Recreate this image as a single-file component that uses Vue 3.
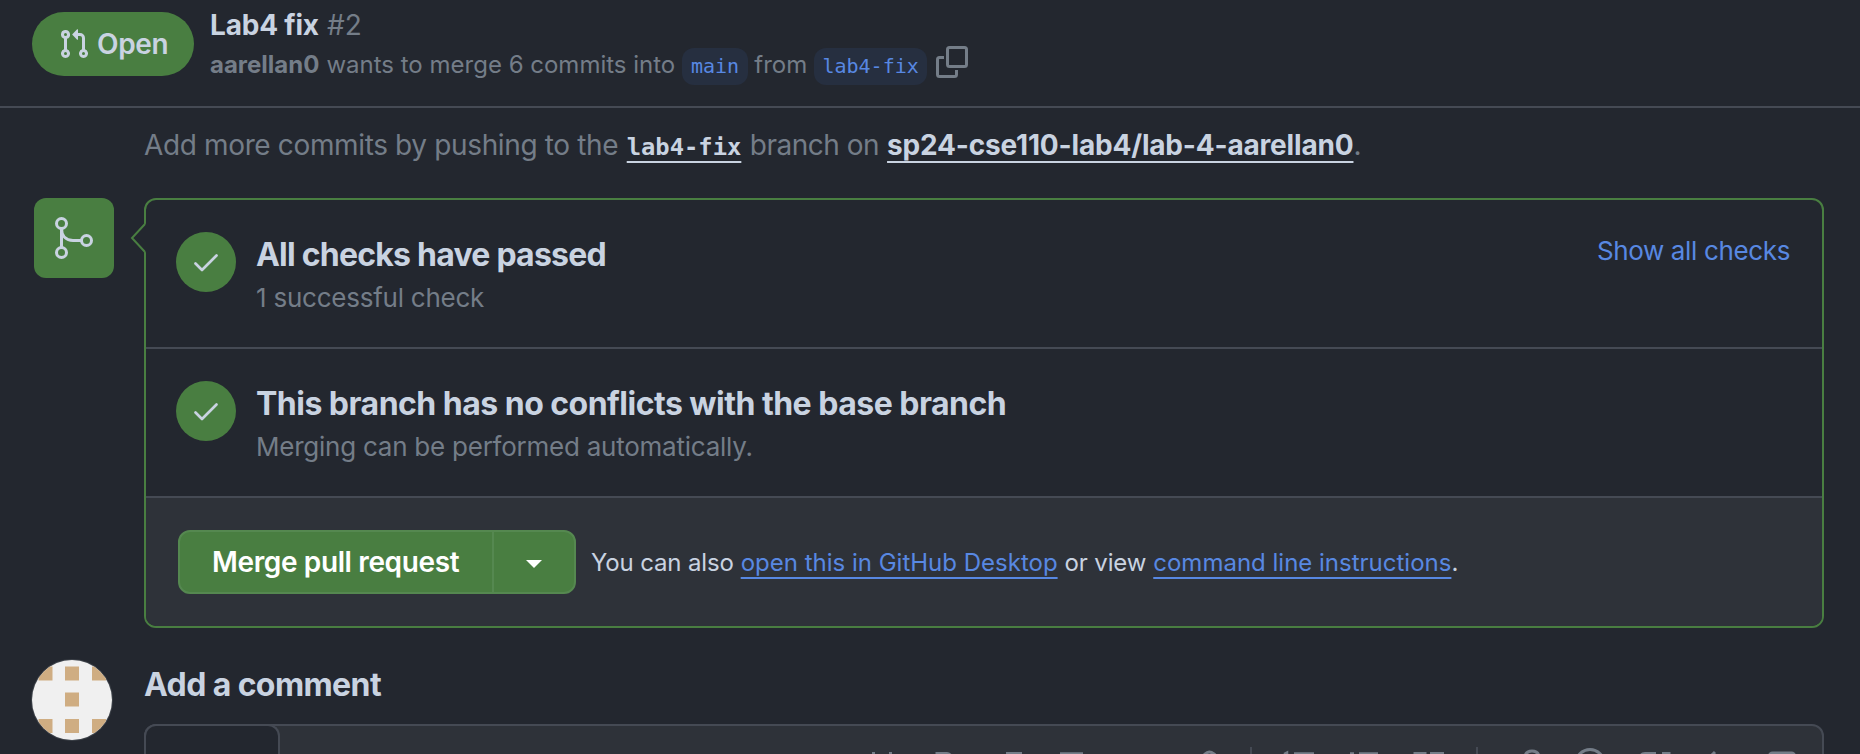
<script setup>
const checks = [
  { id: 'checks', title: 'All checks have passed', note: '1 successful check', action: 'Show all checks' },
  { id: 'conflicts', title: 'This branch has no conflicts with the base branch', note: 'Merging can be performed automatically.' },
]
const avatarCells = [
  [6.5, 7.5], [33, 7.5], [60, 7.5],
  [33, 33.5],
  [6.5, 60], [33, 60], [60, 60],
]
</script>

<template>
  <div class="page">
    <header class="header">
      <span class="state">
        <svg class="state-icon" viewBox="0 0 16 16" width="32" height="32" fill="currentColor">
          <path d="M1.5 3.25a2.25 2.25 0 1 1 3 2.122v5.256a2.251 2.251 0 1 1-1.5 0V5.372A2.25 2.25 0 0 1 1.5 3.25Zm5.677-.177L9.573.677A.25.25 0 0 1 10 .854V2.5h1A2.5 2.5 0 0 1 13.5 5v5.628a2.251 2.251 0 1 1-1.5 0V5a1 1 0 0 0-1-1h-1v1.646a.25.25 0 0 1-.427.177L7.177 3.427a.25.25 0 0 1 0-.354ZM3.75 2.5a.75.75 0 1 0 0 1.5.75.75 0 0 0 0-1.5Zm0 9.5a.75.75 0 1 0 0 1.5.75.75 0 0 0 0-1.5Zm8.25.75a.75.75 0 1 0 1.5 0 .75.75 0 0 0-1.5 0Z" />
        </svg>
        <span class="state-label">Open</span>
      </span>
      <div class="summary">
        <div class="pr-title"><b>Lab4 fix</b><span class="number">#2</span></div>
        <div class="pr-meta">
          <b class="author">aarellan0</b>
          <span class="wants">wants to merge 6 commits into</span>
          <span class="branch">main</span>
          <span class="from">from</span>
          <span class="branch">lab4-fix</span>
          <svg class="copy" viewBox="0 0 32 32" width="32" height="32" fill="none" stroke="currentColor" stroke-width="3">
            <rect x="11.5" y="1.5" width="19" height="19" rx="2" />
            <path d="M8 11.5H3.5A2 2 0 0 0 1.5 13.5V28.5A2 2 0 0 0 3.5 30.5H18.5A2 2 0 0 0 20.5 28.5V24" />
          </svg>
        </div>
      </div>
    </header>

    <main class="content">
      <p class="push-hint">
        <span class="hint-a">Add more commits by pushing to the</span>
        <a class="strong mono">lab4-fix</a>
        <span class="hint-b">branch on</span>
        <span class="hint-c"><a class="strong repo">sp24-cse110-lab4/lab-4-aarellan0</a>.</span>
      </p>

      <section class="merge">
        <span class="merge-badge">
          <svg viewBox="0 0 24 24" width="48" height="48" fill="none" stroke="currentColor" stroke-width="1.5">
            <circle cx="5.75" cy="4.75" r="2.5" />
            <circle cx="5.75" cy="19.25" r="2.5" />
            <circle cx="18.25" cy="13.25" r="2.5" />
            <path d="M5.75 7.25V16.75M5.75 7.25C5.75 11 8 13.25 11.5 13.25H15.75" />
          </svg>
        </span>
        <div class="merge-box">
          <svg class="arrow" viewBox="0 0 16 30" width="16" height="30">
            <path class="arrow-fill" d="M16 0.5L2.5 15L16 29.5Z" />
            <path class="arrow-line" d="M15 1L2 15L15 29" />
          </svg>
          <div v-for="c in checks" :key="c.id" class="row">
            <span class="tick">
              <svg viewBox="0 0 60 60" width="60" height="60" fill="none" stroke="currentColor" stroke-width="2.7" stroke-linecap="round" stroke-linejoin="round">
                <path d="M19.5 31.5L26 38L40.5 23.5" />
              </svg>
            </span>
            <div class="row-text">
              <h3 :class="'title-' + c.id">{{ c.title }}</h3>
              <div class="note">{{ c.note }}</div>
            </div>
            <a v-if="c.action" class="link action">{{ c.action }}</a>
          </div>
          <footer class="merge-foot">
            <div class="button-group">
              <span class="button-main">Merge pull request</span>
              <span class="button-menu"><i class="caret"></i></span>
            </div>
            <div class="alt">
              <span class="alt-text">You can also</span>
              <a class="link lined">open this in GitHub Desktop</a>
              <span class="alt-text">or view</span>
              <span><a class="link lined">command line instructions</a>.</span>
            </div>
          </footer>
        </div>
      </section>

      <section class="comment">
        <svg class="avatar" viewBox="0 0 82 82" width="82" height="82">
          <defs>
            <clipPath id="avatar-clip"><circle cx="41" cy="41" r="40" /></clipPath>
          </defs>
          <circle cx="41" cy="41" r="41" fill="#3c4148" />
          <g clip-path="url(#avatar-clip)">
            <rect width="82" height="82" fill="#f0f0f0" />
            <rect v-for="(p, i) in avatarCells" :key="i" :x="p[0] + 1" :y="p[1]" width="14" height="14" fill="#cfad82" />
          </g>
        </svg>
        <div class="comment-main">
          <h3 class="comment-title">Add a comment</h3>
          <div class="editor">
            <span class="tab"></span>
            <svg class="tools" viewBox="0 0 960 32" width="960" height="32" fill="none" stroke="currentColor" stroke-width="3">
              <path d="M13.5 6V26M30.5 6V26M13.5 16H30.5" />
              <path d="M77 7.5H87A4 4 0 0 1 87 16H77ZM77 16H89A4 4 0 0 1 89 25H77Z" />
              <path d="M146 7.5H162M140 25H156M154 7.5L148 25" />
              <path d="M200 7.5H223M207 16H223M207 24H223M200 15V25" stroke-width="2.5" />
              <path d="M341 13L345 8Q349 4 354 8T354 17L349 22" />
              <path class="rule" d="M391 1V31" stroke-width="2" />
              <path d="M424 8L427 6.5V14M434 7.5H454M434 16H454M434 24H454" stroke-width="2.5" />
              <path d="M490 7.5H494M499 7.5H518M499 16H518M499 24H518" stroke-width="2.5" />
              <path d="M555 7.5H565V16H555ZM570 7.5H584M570 24H584" />
              <path class="rule" d="M617 1V31" stroke-width="2" />
              <path d="M665 20V12Q665 5 672 5T679 12V22" />
              <circle cx="730" cy="17.5" r="14" />
              <circle cx="730" cy="17.5" r="6" />
              <path d="M796 7.5H785Q781 7.5 781 11V27H809V18M802 7.5H809V14L799 18" />
              <path d="M855 6L847 14L855 22M847 14H863Q869 14 869 25" />
              <rect x="909.500" y="7" width="25" height="22" rx="3" />
            </svg>
          </div>
        </div>
      </section>
    </main>
  </div>
</template>

<style>
html,
body {
  margin: 0;
  background: #23272f;
}
</style>

<style scoped>
.page {
  box-sizing: border-box;
  width: 1860px;
  height: 754px;
  overflow: hidden;
  background: #23272f;
  color: #c9d3e1;
  font-family: Inter, "Liberation Sans", sans-serif;
}
.header {
  box-sizing: border-box;
  display: flex;
  align-items: flex-start;
  gap: 16px;
  height: 108px;
  padding: 12px 32px 0;
  border-bottom: 2px solid #454a54;
}
.state {
  box-sizing: border-box;
  display: flex;
  flex: none;
  align-items: center;
  gap: 7px;
  width: 162px;
  height: 64px;
  padding-left: 26px;
  border-radius: 32px;
  background: #497e41;
  font-size: 28px;
  font-weight: 600;
  letter-spacing: -0.35px;
}
.summary {
  margin-top: -8px;
  white-space: nowrap;
}
.pr-title {
  display: flex;
  gap: 8px;
  height: 42px;
  line-height: 42px;
  font-size: 28px;
}
.pr-title b {
  letter-spacing: -0.2px;
}
b,
h3 {
  font-weight: 700;
}
.number,
.pr-meta {
  color: #747d88;
}
.pr-meta {
  display: flex;
  align-items: center;
  height: 36px;
  line-height: 36px;
  font-size: 24px;
}
.author,
.wants,
.from {
  padding-top: 2px;
}
.wants {
  margin: 0 7px 0 7px;
}
.from {
  margin: 0 6.5px;
}
.branch {
  height: 37px;
  margin-top: 5px;
  padding: 0 8.7px;
  border-radius: 12px;
  background: #262f40;
  color: #5888e2;
  font: 20px/36px "DejaVu Sans Mono", monospace;
}
.copy {
  margin-top: -4px;
  margin-left: 8.5px;
}
.content {
  padding: 0 36px 0 32px;
}
.push-hint {
  display: flex;
  align-items: baseline;
  gap: 8.5px;
  margin: 0;
  padding: 15px 0 0 112px;
  height: 75px;
  line-height: 44px;
  font-size: 28px;
  color: #747d88;
  white-space: nowrap;
}
.hint-a {
  letter-spacing: -0.36px;
}
.hint-b {
  letter-spacing: -0.5px;
}
.hint-c {
  margin-left: -0.5px;
}
.strong {
  font-weight: 700;
  color: #c9d3e1;
  text-decoration: underline;
  text-decoration-thickness: 2px;
  text-underline-offset: 6px;
}
.repo {
  letter-spacing: -0.18px;
}
.mono {
  font-family: "DejaVu Sans Mono", monospace;
  font-size: 23.8px;
  line-height: 40px;
}
.merge {
  display: flex;
  gap: 30px;
  padding-left: 2px;
}
.merge-badge {
  display: flex;
  flex: none;
  align-items: center;
  justify-content: center;
  width: 80px;
  height: 80px;
  border-radius: 12px;
  background: #497e41;
}
.merge-box {
  position: relative;
  box-sizing: border-box;
  flex: 1;
  height: 430px;
  border: 2px solid #497e41;
  border-radius: 12px;
}
.arrow {
  position: absolute;
  top: 23px;
  left: -16px;
}
.arrow-fill {
  fill: #23272f;
}
.arrow-line {
  fill: none;
  stroke: #497e41;
  stroke-width: 2;
}
.row {
  box-sizing: border-box;
  display: flex;
  height: 149px;
  padding: 32px 32px 0 30px;
  border-bottom: 2px solid #454a54;
}
.tick {
  flex: none;
  width: 60px;
  height: 60px;
  margin-right: 20px;
  border-radius: 50%;
  background: #497e41;
}
.tick svg {
  display: block;
}
.row-text {
  flex: 1;
  padding-top: 1px;
  white-space: nowrap;
}
h3 {
  margin: 0;
  font-size: 32px;
  line-height: 44px;
}
.title-checks {
  letter-spacing: -0.77px;
}
.title-conflicts {
  letter-spacing: -0.52px;
}
.note {
  line-height: 42px;
  font-size: 26px;
  letter-spacing: -0.24px;
  color: #747d88;
}
.link {
  color: #5888e2;
}
.action {
  font-size: 26px;
  line-height: 38px;
  letter-spacing: -0.36px;
  white-space: nowrap;
}
.merge-foot {
  box-sizing: border-box;
  display: flex;
  align-items: center;
  gap: 15px;
  height: 128px;
  padding-left: 32px;
  border-radius: 0 0 10px 10px;
  background: #2e3239;
}
.button-group {
  box-sizing: border-box;
  display: flex;
  width: 398px;
  height: 64px;
  border: 2px solid #558850;
  border-radius: 12px;
  background: #497e41;
  color: #fff;
}
.button-main {
  box-sizing: border-box;
  display: flex;
  align-items: center;
  width: 314px;
  padding-left: 32px;
  border-right: 2px solid #558850;
  font-size: 28px;
  font-weight: 600;
  letter-spacing: -0.37px;
  white-space: nowrap;
}
.button-menu {
  display: flex;
  flex: 1;
  align-items: center;
  justify-content: center;
}
.caret {
  margin-top: 4px;
  border: 8px solid transparent;
  border-top-color: #fff;
  border-bottom: 0;
}
.alt {
  display: flex;
  gap: 7px;
  font-size: 24px;
  white-space: nowrap;
}
.alt-text {
  letter-spacing: -0.15px;
}
.lined {
  text-decoration: underline;
  text-decoration-thickness: 2px;
  text-underline-offset: 6px;
}
.comment {
  display: flex;
  gap: 31px;
  margin-top: 31px;
  margin-left: -1px;
}
.avatar {
  flex: none;
}
.comment-main {
  flex: 1;
}
.comment-title {
  height: 65px;
  line-height: 51px;
  letter-spacing: -0.6px;
}
.editor {
  box-sizing: border-box;
  display: flex;
  height: 160px;
  border: 2px solid #454a54;
  border-radius: 12px;
  background: #2e3239;
  color: #747d88;
}
.tab {
  box-sizing: border-box;
  width: 136px;
  height: 76px;
  margin-left: -2px;
  margin-top: -2px;
  border: 2px solid #454a54;
  border-bottom: 0;
  border-radius: 12px 12px 0 0;
  background: #23272f;
}
.tools {
  margin: 20px 2px 0 auto;
}
.rule {
  stroke: #454a54;
}
</style>
